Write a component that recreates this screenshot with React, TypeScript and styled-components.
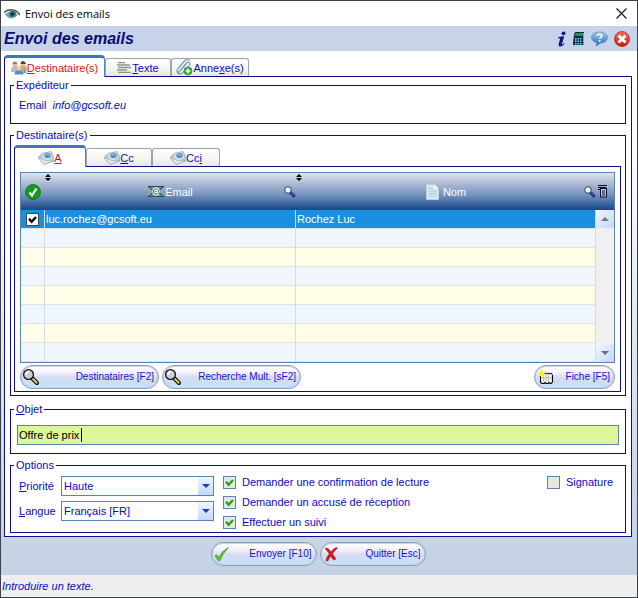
import React, { useState } from "react";
import styled, { createGlobalStyle, css } from "styled-components";

const NAVY = "#0c0c94";
const BLUE = "#0a0ac0";
const STEEL = "#5a82b4";

const Global = createGlobalStyle`
  *, *::before, *::after { box-sizing: border-box; }
  html, body { margin: 0; }
  body, button, input, select {
    font-family: "Liberation Sans", Arial, sans-serif;
    font-size: 11px;
    line-height: 14px;
    color: ${BLUE};
  }
  svg { display: block; flex: none; }
`;

/* ---------- window frame ---------- */

const Window = styled.div`
  min-height: 100vh;
  display: flex;
  flex-direction: column;
  border: 1px solid #3c424c;
  background: #fff;
`;

const TitleBar = styled.header`
  height: 25px;
  display: flex;
  align-items: center;
  justify-content: space-between;
  padding: 0 10px 0 3px;
`;

const WindowTitle = styled.div`
  display: flex;
  align-items: center;
  gap: 5px;
  font-family: "Open Sans", "Noto Sans", sans-serif;
  font-size: 11px;
  line-height: 16px;
  color: #000;
`;

const IconButton = styled.button`
  display: flex;
  padding: 0;
  border: 0;
  background: none;
`;

const Banner = styled.div`
  height: 25px;
  display: flex;
  align-items: center;
  justify-content: space-between;
  padding: 0 7px 0 3px;
  background: #c6d3e9;
`;

const BannerTitle = styled.h1`
  margin: 0;
  font-size: 16px;
  line-height: 20px;
  font-style: italic;
  font-weight: bold;
  color: #0a0a78;
`;

const BannerTools = styled.div`
  display: flex;
  align-items: center;
  gap: 6px;
`;

const Body = styled.main`
  flex: 1;
  display: flex;
  flex-direction: column;
  padding: 4px 5px 0 3px;
  background: linear-gradient(#fff 0%, #fbfcfe 20%, #e0e6f2 55%, #cbd7e8 85%, #c4d2e3 100%);
`;

/* ---------- tabs ---------- */

const TabStrip = styled.div`
  height: 21px;
  display: flex;
  align-items: flex-end;
`;

const Tab = styled.button<{ $active?: boolean; $width: number }>`
  width: ${(p) => p.$width}px;
  height: 18px;
  display: flex;
  align-items: center;
  justify-content: center;
  padding: 0;
  border: 1px solid #9aa4b0;
  border-bottom: 0;
  border-radius: 3px 3px 0 0;
  background: linear-gradient(#fff, #f4f4f0 60%, #e6e6e2);
  white-space: nowrap;
  ${(p) =>
    p.$active &&
    css`
      position: relative;
      height: 22px;
      margin-bottom: -1px;
      border-color: ${STEEL} ${STEEL} ${STEEL} ${NAVY};
      border-top: 3px solid #4474b4;
      border-radius: 4px 4px 0 0;
      background: #fff;
      color: #e01010;
    `}
`;

const Panel = styled.section`
  border: 1px solid ${NAVY};
  background: #fff;
`;

const MainPanel = styled(Panel)`
  flex: 1;
  display: flex;
  flex-direction: column;
  padding: 2px 5px 3px;
`;

const ListPanel = styled(Panel)`
  display: flex;
  flex-direction: column;
  gap: 2px;
  padding: 5px 5px 2px;
`;

/* ---------- groups ---------- */

const Group = styled.fieldset<{ $pad: string; $gap?: number }>`
  min-width: 0;
  margin: 0 0 ${(p) => p.$gap ?? 0}px;
  padding: ${(p) => p.$pad};
  border: 1px solid ${NAVY};
`;

const Legend = styled.legend`
  padding: 0 2px;
  line-height: 13px;
`;

const SenderLine = styled.div`
  display: flex;
  gap: 6px;
  padding: 0 5px;
`;

/* ---------- recipients grid ---------- */

const GridFrame = styled.div`
  border: 1px solid ${STEEL};
`;

const Grid = styled.table`
  width: 100%;
  table-layout: fixed;
  border-collapse: separate;
  border-spacing: 0;

  thead {
    background: linear-gradient(#dfe4ec 0%, #a9b9d2 30%, #6f8fbb 62%, #2c5796 90%, #1c4788 100%);
  }
`;

const HeadCell = styled.th`
  position: relative;
  height: 37px;
  padding: 0;
  font-weight: normal;
  color: #fff;
`;

const HeadContent = styled.div<{ $indent?: boolean }>`
  display: flex;
  align-items: center;
  padding-left: ${(p) => (p.$indent ? 12 : 0)}px;
`;

const HeadLabel = styled.span`
  flex: 1;
  display: flex;
  align-items: center;
  justify-content: center;
  gap: 1px;
`;

const SortMark = styled.span`
  position: absolute;
  top: 1px;
  left: 0;
`;

const HeadMenu = styled.span`
  display: flex;
  padding: 0 6px 0 2px;
`;

const Row = styled.tr<{ $selected?: boolean }>`
  background: ${(p) => (p.$selected ? "#1a8fe0" : "#fffde8")};
  color: ${(p) => (p.$selected ? "#fff" : BLUE)};
  &:nth-child(even) {
    background: #eff7fd;
  }
`;

const Cell = styled.td`
  height: 19px;
  padding: 0 1px;
  border-right: 1px solid #d4dce2;
  border-bottom: 1px solid #dfe3e0;
`;

const ScrollCell = styled.td`
  padding: 0;
  background: #f0f0f0;
`;

const ScrollBar = styled.div`
  height: 152px;
  display: flex;
  flex-direction: column;
  justify-content: space-between;
`;

const ScrollButton = styled.button`
  height: 18px;
  display: flex;
  align-items: center;
  justify-content: center;
  padding: 0;
  border: 0;
  background: linear-gradient(135deg, #f4f7fe, #c3d5f8);
`;

const CheckBox = styled.input<{ $plain?: boolean }>`
  appearance: none;
  display: block;
  width: 13px;
  height: 13px;
  margin: 0;
  border: 1px solid ${(p) => (p.$plain ? "#444" : STEEL)};
  background: ${(p) => (p.$plain ? "#fff" : "#e9e6da")};
`;

const TickWrap = styled.span`
  position: relative;
  display: flex;
  svg {
    position: absolute;
    inset: 0 auto auto 0;
    pointer-events: none;
  }
`;

const RowPick = styled.div`
  display: flex;
  justify-content: center;
`;

/* ---------- buttons ---------- */

const Actions = styled.div`
  display: flex;
  gap: 3px;
`;

const Spacer = styled.div`
  flex: 1;
`;

const PillButton = styled.button<{ $width: number }>`
  width: ${(p) => p.$width}px;
  height: 24px;
  display: flex;
  align-items: center;
  justify-content: space-between;
  padding: 0 4px 0 1px;
  border: 1px solid #8e9fbd;
  border-radius: 12px;
  box-shadow: inset 0 0 0 1px #c9d4e6;
  background: linear-gradient(#fff 0%, #f3f1fc 30%, #d9dcf5 52%, #c9e0f3 75%, #c3e2f2 100%);
  font-size: 10px;
  line-height: 12px;
  color: #1414d2;
  white-space: nowrap;
`;

const Footer = styled.footer`
  display: flex;
  justify-content: center;
  gap: 3px;
  padding: 5px 0 9px;
`;

/* ---------- fields ---------- */

const SubjectBox = styled.div`
  position: relative;
  margin: 0 3px;
`;

const SubjectInput = styled.input`
  display: block;
  width: 100%;
  height: 20px;
  padding: 0 1px;
  border: 1px solid ${STEEL};
  background: #def69a;
  color: #000;
  outline: 0;
`;

const Caret = styled.span`
  position: absolute;
  left: 64px;
  top: 3px;
  width: 1px;
  height: 14px;
  background: #000;
`;

const Options = styled.div`
  display: flex;
  align-items: flex-start;
  gap: 9px;
  padding: 0 9px 0 5px;
`;

const SelectGrid = styled.div`
  display: grid;
  grid-template-columns: 42px 153px;
  row-gap: 5px;
  align-items: center;
`;

const SelectBox = styled.div`
  position: relative;
`;

const Select = styled.select`
  appearance: none;
  display: block;
  width: 100%;
  height: 20px;
  padding: 0 18px 0 2px;
  border: 1px solid ${STEEL};
  border-radius: 0;
  background: #fff;
`;

const SelectArrow = styled.span`
  position: absolute;
  top: 1px;
  right: 1px;
  width: 15px;
  height: 18px;
  display: flex;
  align-items: center;
  justify-content: center;
  background: linear-gradient(#f0f5fe, #c4d8f8);
  pointer-events: none;
`;

const CheckList = styled.div`
  flex: 1;
  display: flex;
  flex-direction: column;
  gap: 7px;
`;

const CheckLabel = styled.label`
  height: 13px;
  display: flex;
  align-items: center;
  gap: 6px;
  line-height: 13px;
`;

const StatusBar = styled.div`
  height: 22px;
  display: flex;
  align-items: center;
  padding: 0 1px;
  background: #efefef;
  font-style: italic;
`;

/* ---------- icons ---------- */

const EyeIcon = () => (
  <svg width="16" height="12" viewBox="0 0 16 12">
    <path d="M0 4.500Q4 1 9 2q4 .5 7 5" fill="none" stroke="#555" strokeWidth="1.600" />
    <path d="M1 6q4-3 8-3 3 1 5 4-3 3-7 3Q3 9 1 6z" fill="#8fa0a4" />
    <circle cx="8.500" cy="6" r="3.400" fill="#2b7b80" />
    <circle cx="8.500" cy="6" r="1.600" fill="#0c1c24" />
    <path d="M1 6q3 4 8 4" fill="none" stroke="#889" />
  </svg>
);

const CloseIcon = () => (
  <svg width="11" height="11" viewBox="0 0 11 11">
    <path d="M.5.5l10 10M10.500.5l-10 10" stroke="#111" strokeWidth="1.100" />
  </svg>
);

const InfoIcon = () => (
  <svg width="10" height="16" viewBox="0 0 10 16">
    <circle cx="6.500" cy="2.300" r="1.900" fill="#16167c" />
    <path d="M1.200 6.300Q4 5.500 7.200 5.300L5.100 12.500q-.3 1.200.4 1 .8-.3 1.500-1.400l.7.500Q5.800 15.500 3.400 15.500q-2.400 0-1.700-2.800l1.400-4.700q.2-.9-2-.8z" fill="#16167c" />
  </svg>
);

const CalculatorIcon = () => (
  <svg width="12" height="14" viewBox="0 0 12 14">
    <path d="M2 0h9v1l-1 12H0V11L1 3z" fill="#0d2a4c" />
    <path d="M2.500 1h7.500v3H2z" fill="#129a58" />
    <path d="M2 6h1.500v1.500H2zM4.500 6H6v1.500H4.500zM7 6h1.500v1.500H7zM2 8.500h1.500V10H2zM4.500 8.500H6V10H4.500zM7 8.500h1.500V10H7zM2 11h1.500v1.500H2zM4.500 11H6v1.500H4.500zM7 11h1.500v1.500H7z" fill="#6fe0f4" />
    <path d="M10.500 1v12" stroke="#7ab" />
  </svg>
);

const HelpIcon = () => (
  <svg width="17" height="16" viewBox="0 0 17 16">
    <defs>
      <linearGradient id="bubble" x1="0" y1="0" x2="0" y2="1">
        <stop offset="0" stopColor="#a8c8ec" />
        <stop offset="1" stopColor="#2468b8" />
      </linearGradient>
    </defs>
    <path d="M8.500 1C13 1 16.500 3.200 16.500 6.500S13 12 9.500 12L5 15l.8-3.300C2.500 11 .5 9 .5 6.500.5 3.200 4 1 8.500 1z" fill="url(#bubble)" stroke="#4f7fb8" strokeWidth=".6" />
    <path d="M6.300 4.800Q6.500 3.200 8.600 3.200t2.200 1.700Q10.800 6 9.500 6.600 8.600 7.100 8.600 8" fill="none" stroke="#fff" strokeWidth="1.600" />
    <circle cx="8.600" cy="9.900" r="1" fill="#fff" />
  </svg>
);

const StopIcon = () => (
  <svg width="16" height="16" viewBox="0 0 16 16">
    <defs>
      <linearGradient id="stop" x1="0" y1="0" x2="0" y2="1">
        <stop offset="0" stopColor="#f0705c" />
        <stop offset="1" stopColor="#d01208" />
      </linearGradient>
    </defs>
    <circle cx="8" cy="8" r="7.500" fill="url(#stop)" stroke="#b8281c" strokeWidth=".8" />
    <path d="M4.500 4.500l7 7M11.500 4.500l-7 7" stroke="#fff" strokeWidth="3" />
  </svg>
);

const PeopleIcon = () => (
  <svg width="16" height="14" viewBox="0 0 16 14">
    <path d="M0 10q0-5 4-5t4 5v1H0z" fill="#b4bcc8" />
    <path d="M8 8q0-4 4-4t4 4v2H8z" fill="#c8b078" />
    <circle cx="4" cy="3.500" r="2.500" fill="#e8b48c" />
    <path d="M1.500 3Q2 .5 4 .5T6.500 3z" fill="#a07848" />
    <circle cx="12" cy="3" r="2.400" fill="#ecc09a" />
    <path d="M9.500 3Q10 0 12 0t3 3z" fill="#50402c" />
    <path d="M3.500 13.500q0-4.500 4.500-4.500t4.500 4.500z" fill="#5c88cc" />
    <circle cx="8" cy="7.500" r="2.300" fill="#efc7a4" />
    <path d="M13 7l-1 5h3.500z" fill="#8c94a4" />
  </svg>
);

const LinesIcon = () => (
  <svg width="15" height="11" viewBox="0 0 15 11">
    <path d="M1 .5h7M0 3h13M1 5.500h13M0 8h10M1 10.500h13" stroke="#8c9684" strokeWidth="1.300" />
  </svg>
);

const ClipIcon = () => (
  <svg width="17" height="17" viewBox="0 0 17 17">
    <path d="M2.500 13.500L10.500 4q1.500-1.500 2.800-.4t.1 2.700L6.500 14Q4 16 2 14T2 9.500L8.500 2Q11-.2 13.700 1.500" fill="none" stroke="#6b9ab8" strokeWidth="1.200" />
    <path d="M5 11.500L10.500 5.500" stroke="#8ab0c8" />
    <circle cx="12" cy="12" r="4" fill="#43a83c" stroke="#2d8428" strokeWidth=".6" />
    <path d="M12 9.600v4.800M9.600 12h4.800" stroke="#fff" strokeWidth="1.500" />
  </svg>
);

const LetterIcon = () => (
  <svg width="16" height="14" viewBox="0 0 16 14">
    <path d="M0 6.500L4 2.500 13 .5l2.500 5L16 10 6 13.500z" fill="#c4ccd2" stroke="#98a4ae" strokeWidth=".7" />
    <path d="M3.500 3L12.500.8l2.500 6-7 3.700-3.500-2z" fill="#d4e4ee" stroke="#a4b8c6" strokeWidth=".6" />
    <ellipse cx="9.500" cy="4.500" rx="3.200" ry="2.600" fill="#4f90bc" />
    <path d="M7.500 4q2-1.800 4 .8" stroke="#a9d4e8" fill="none" />
    <path d="M0 6.500l8 3L16 9.500 6 13.500z" fill="#e4e6e8" stroke="#a0a8b0" strokeWidth=".6" />
  </svg>
);

const GreenCheckIcon = () => (
  <svg width="16" height="16" viewBox="0 0 16 16">
    <circle cx="8" cy="8" r="7.500" fill="#169a22" stroke="#0c7418" strokeWidth=".8" />
    <path d="M4.500 8.500L7 11.500 11.500 4.500" fill="none" stroke="#fff" strokeWidth="2.200" />
  </svg>
);

const MailIcon = () => (
  <svg width="16" height="11" viewBox="0 0 16 11">
    <rect width="16" height="11" fill="#6f949e" />
    <path d="M0 .5h16M0 10.500h16" stroke="#2c4c5c" />
    <path d="M0 0l6 5.500L0 11M16 0l-6 5.500L16 11" fill="#8aa8b0" stroke="#0c2430" strokeWidth=".9" />
    <path d="M11 8.300Q8 10.500 5.500 8.300 3.500 5.500 5.500 2.700 8 .8 10.500 2.700 12.300 5 11 6.800 9.500 7.500 9.500 6V3.800" fill="none" stroke="#fff" strokeWidth=".9" />
    <circle cx="8" cy="5.500" r="1.400" fill="none" stroke="#fff" strokeWidth=".9" />
  </svg>
);

const PageIcon = () => (
  <svg width="13" height="16" viewBox="0 0 13 16">
    <path d="M.5.5H8l4.500 4v11H.5z" fill="#d8e9f4" stroke="#b8d0e2" />
    <path d="M8 .5v4h4.500z" fill="#fff" />
    <path d="M2.500 4.500H7M2.500 7h8M2.500 9.500h8M2.500 12h8" stroke="#a9c4d6" />
  </svg>
);

const LensIcon = () => (
  <svg width="12" height="12" viewBox="0 0 12 12">
    <path d="M6.500 6.500L10.800 10.800" stroke="#101070" strokeWidth="2.800" />
    <path d="M7 6.800L10.500 10.200" stroke="#7c9cf0" strokeWidth="1" />
    <circle cx="4" cy="4" r="3.300" fill="#e4ecf6" stroke="#38404c" />
    <path d="M2.500 4q0-1.500 1.500-1.500" fill="none" stroke="#fff" />
  </svg>
);

const SearchIcon = () => (
  <svg width="18" height="18" viewBox="0 0 18 18">
    <path d="M10.500 10.500L15 15" stroke="#000" strokeWidth="4" strokeLinecap="round" />
    <path d="M11 11l3.800 3.800" stroke="#d8cf70" strokeWidth="2" strokeLinecap="round" />
    <circle cx="6.500" cy="6.500" r="4.900" fill="#ccd0d4" stroke="#101010" strokeWidth="1.300" />
    <path d="M4 7q0-3 3-3" fill="none" stroke="#fff" strokeWidth="1.400" />
  </svg>
);

const ListIcon = () => (
  <svg width="10" height="13" viewBox="0 0 10 13">
    <path d="M0 .5h9M0 2.500h8M0 4.500h2" stroke="#0a0a30" />
    <rect x="2.500" y="3.500" width="6" height="8.500" fill="#b8c8e0" stroke="#0a0a30" />
    <path d="M4 6h3M4 8h3M4 10h3" stroke="#0a0a30" />
  </svg>
);

const SortIcon = () => (
  <svg width="6" height="7" viewBox="0 0 6 7">
    <path d="M3 0l3 3H0zM3 7l3-3H0z" fill="#000" />
  </svg>
);

const CardIcon = () => (
  <svg width="18" height="16" viewBox="0 0 18 16">
    <path d="M4.500 6v7.500l1.500 1h2l1-1 1 1h2l1-1 1 1h1l1.500-1.500v-7" fill="#f4f4ee" stroke="#000" strokeWidth="1.100" />
    <path d="M7 5l1-1 1.500 1 1-1 1.500 1 1-1 1.500 1 1-1 .5 1.500" fill="none" stroke="#000" />
    <path d="M7.500 6v7M10 6v7M12.500 6v7M5 9h11" stroke="#bcbcb4" />
    <path d="M6 0l1 3 3 .5-2.500 1.800L8 8 5.500 6.500 3 8l.5-3L2 3l2.500-.3z" fill="#fbf000" />
  </svg>
);

const SendIcon = () => (
  <svg width="17" height="16" viewBox="0 0 17 16">
    <path d="M2 9.500q1.500-1 2.500 0l1.500 2Q9 4.500 15.500 1.500 10 7 7 14.500q-1.200.8-2 0z" fill="#5fc42c" stroke="#3f9c1c" strokeWidth=".7" />
  </svg>
);

const QuitIcon = () => (
  <svg width="18" height="16" viewBox="0 0 18 16">
    <path d="M3 2.500q2-.8 3 0 2 1.500 3 3.500 2.500-4 5.500-4.500l1 .8Q12.500 4.500 10.500 8q2 2.500 3.500 5l-2.500 1Q10 12 8.800 10.200 6.500 13 5.800 15q-1.300.3-2-.8Q5 10.500 7.300 7.800 5 4.500 3 2.500z" fill="#d8141c" stroke="#a80c14" strokeWidth=".5" />
  </svg>
);

const Triangle = ({ up, color }: { up?: boolean; color: string }) => (
  <svg width="8" height="4" viewBox="0 0 8 4">
    <path d={up ? "M4 0l4 4H0z" : "M0 0h8L4 4z"} fill={color} />
  </svg>
);

const Tick = ({ color }: { color: string }) => (
  <svg width="13" height="13" viewBox="0 0 13 13">
    <path d="M3 5.800L5.600 8.700 10 4" fill="none" stroke={color} strokeWidth="2.400" />
  </svg>
);

/* ---------- composed parts ---------- */

function Choice({ label, initial }: { label: string; initial?: boolean }) {
  const [on, setOn] = useState(!!initial);
  return (
    <CheckLabel>
      <TickWrap>
        <CheckBox type="checkbox" checked={on} onChange={() => setOn(!on)} />
        {on && <Tick color="#18a428" />}
      </TickWrap>
      {label}
    </CheckLabel>
  );
}

function DropDown({ id, options }: { id: string; options: string[] }) {
  return (
    <SelectBox>
      <Select id={id}>
        {options.map((o) => (
          <option key={o}>{o}</option>
        ))}
      </Select>
      <SelectArrow>
        <Triangle color="#1440b4" />
      </SelectArrow>
    </SelectBox>
  );
}

const emptyRows = [1, 2, 3, 4, 5, 6, 7];

export default function App() {
  const [subject, setSubject] = useState("Offre de prix");
  const [picked, setPicked] = useState(true);

  return (
    <Window>
      <Global />
      <TitleBar>
        <WindowTitle>
          <EyeIcon />
          Envoi des emails
        </WindowTitle>
        <IconButton aria-label="Fermer">
          <CloseIcon />
        </IconButton>
      </TitleBar>
      <Banner>
        <BannerTitle>Envoi des emails</BannerTitle>
        <BannerTools>
          <IconButton aria-label="Informations"><InfoIcon /></IconButton>
          <IconButton aria-label="Calculatrice"><CalculatorIcon /></IconButton>
          <IconButton aria-label="Aide"><HelpIcon /></IconButton>
          <IconButton aria-label="Quitter"><StopIcon /></IconButton>
        </BannerTools>
      </Banner>

      <Body>
        <TabStrip role="tablist">
          <Tab role="tab" aria-selected="true" $active $width={101}>
            <PeopleIcon />
            <span><u>D</u>estinataire(s)</span>
          </Tab>
          <Tab role="tab" aria-selected="false" $width={66}>
            <LinesIcon />
            <span><u>T</u>exte</span>
          </Tab>
          <Tab role="tab" aria-selected="false" $width={78}>
            <ClipIcon />
            <span>Anne<u>x</u>e(s)</span>
          </Tab>
        </TabStrip>

        <MainPanel>
          <Group $pad="6px 3px 11px" $gap={5}>
            <Legend>Expéditeur</Legend>
            <SenderLine>
              <span>Email</span>
              <em>info@gcsoft.eu</em>
            </SenderLine>
          </Group>

          <Group $pad="3px 4px 3px 3px" $gap={7}>
            <Legend>Destinataire(s)</Legend>
            <TabStrip role="tablist">
              <Tab role="tab" aria-selected="true" $active $width={72}>
                <LetterIcon />
                <u>A</u>
              </Tab>
              <Tab role="tab" aria-selected="false" $width={66}>
                <LetterIcon />
                <span><u>C</u>c</span>
              </Tab>
              <Tab role="tab" aria-selected="false" $width={68}>
                <LetterIcon />
                <span>Cc<u>i</u></span>
              </Tab>
            </TabStrip>
            <ListPanel>
              <GridFrame>
                <Grid>
                  <colgroup>
                    <col width="24" />
                    <col width="251" />
                    <col />
                    <col width="18" />
                  </colgroup>
                  <thead>
                    <tr>
                      <HeadCell scope="col" aria-label="Sélection">
                        <HeadContent><HeadLabel><GreenCheckIcon /></HeadLabel></HeadContent>
                      </HeadCell>
                      <HeadCell scope="col">
                        <SortMark><SortIcon /></SortMark>
                        <HeadContent $indent>
                          <HeadLabel><MailIcon />Email</HeadLabel>
                          <LensIcon />
                        </HeadContent>
                      </HeadCell>
                      <HeadCell scope="col" colSpan={2}>
                        <SortMark><SortIcon /></SortMark>
                        <HeadContent $indent>
                          <HeadLabel><PageIcon />&nbsp;Nom</HeadLabel>
                          <LensIcon />
                          <HeadMenu><ListIcon /></HeadMenu>
                        </HeadContent>
                      </HeadCell>
                    </tr>
                  </thead>
                  <tbody>
                    <Row $selected>
                      <Cell>
                        <RowPick>
                          <TickWrap>
                            <CheckBox
                              $plain
                              type="checkbox"
                              aria-label="Sélectionner Rochez Luc"
                              checked={picked}
                              onChange={() => setPicked(!picked)}
                            />
                            {picked && <Tick color="#000" />}
                          </TickWrap>
                        </RowPick>
                      </Cell>
                      <Cell>luc.rochez@gcsoft.eu</Cell>
                      <Cell>Rochez Luc</Cell>
                      <ScrollCell rowSpan={8}>
                        <ScrollBar>
                          <ScrollButton aria-label="Défiler vers le haut">
                            <Triangle up color="#74787e" />
                          </ScrollButton>
                          <ScrollButton aria-label="Défiler vers le bas">
                            <Triangle color="#646c80" />
                          </ScrollButton>
                        </ScrollBar>
                      </ScrollCell>
                    </Row>
                    {emptyRows.map((n) => (
                      <Row key={n}>
                        <Cell />
                        <Cell />
                        <Cell />
                      </Row>
                    ))}
                  </tbody>
                </Grid>
              </GridFrame>
              <Actions>
                <PillButton $width={139}><SearchIcon />Destinataires [F2]</PillButton>
                <PillButton $width={139}><SearchIcon />Recherche Mult. [sF2]</PillButton>
                <Spacer />
                <PillButton $width={81}><CardIcon />Fiche [F5]</PillButton>
              </Actions>
            </ListPanel>
          </Group>

          <Group $pad="9px 3px 8px" $gap={5}>
            <Legend><label htmlFor="subject"><u>O</u>bjet</label></Legend>
            <SubjectBox>
              <SubjectInput id="subject" value={subject} onChange={(e) => setSubject(e.target.value)} />
              <Caret />
            </SubjectBox>
          </Group>

          <Group $pad="4px 3px 3px">
            <Legend>Options</Legend>
            <Options>
              <SelectGrid>
                <label htmlFor="priority"><u>P</u>riorité</label>
                <DropDown id="priority" options={["Haute", "Normale", "Basse"]} />
                <label htmlFor="language"><u>L</u>angue</label>
                <DropDown id="language" options={["Français [FR]", "English [EN]"]} />
              </SelectGrid>
              <CheckList>
                <Choice label="Demander une confirmation de lecture" initial />
                <Choice label="Demander un accusé de réception" initial />
                <Choice label="Effectuer un suivi" initial />
              </CheckList>
              <Choice label="Signature" />
            </Options>
          </Group>
        </MainPanel>

        <Footer>
          <PillButton $width={106}><SendIcon />Envoyer [F10]</PillButton>
          <PillButton $width={106}><QuitIcon />Quitter [Esc]</PillButton>
        </Footer>
      </Body>
      <StatusBar role="status">Introduire un texte.</StatusBar>
    </Window>
  );
}
